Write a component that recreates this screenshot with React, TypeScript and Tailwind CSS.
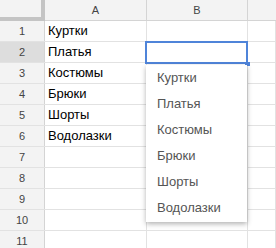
const items = ['Куртки', 'Платья', 'Костюмы', 'Брюки', 'Шорты', 'Водолазки'];
const rows = [1, 2, 3, 4, 5, 6, 7, 8, 9, 10, 11];

function Cell({ children, col }: { children?: React.ReactNode; col: 'a' | 'b' | 'c' }) {
  const w = col === 'a' ? 'w-[102px]' : col === 'b' ? 'w-[101px]' : 'flex-1';
  return (
    <div className={`${w} h-full shrink-0 border-r border-[#e2e2e2] pl-[3px] flex items-center overflow-hidden whitespace-nowrap`}>
      {children}
    </div>
  );
}

export default function App() {
  return (
    <div className="relative w-[276px] h-[248px] overflow-hidden bg-white font-['Liberation_Sans',Arial,sans-serif] text-[13px] text-black">
      {/* Column headers */}
      <div className="flex h-[21px] bg-[#f3f3f3] text-[11px] text-[#444]">
        <div className="w-[45px] shrink-0 border-r-4 border-b-4 border-[#c4c4c4]" />
        <div className="w-[102px] shrink-0 border-r border-b border-[#d4d4d4] flex items-center justify-center">A</div>
        <div className="w-[101px] shrink-0 border-r border-b border-[#d4d4d4] flex items-center justify-center">B</div>
        <div className="flex-1 border-b border-[#d4d4d4]" />
      </div>

      {rows.map((n) => (
        <div key={n} className="flex h-[21px] border-b border-[#e2e2e2]">
          <div
            className={`w-[45px] shrink-0 border-r border-[#d4d4d4] flex items-center justify-center text-[11px] text-[#444] ${
              n === 2 ? 'bg-[#dddddd]' : 'bg-[#f3f3f3]'
            }`}
          >
            {n}
          </div>
          <Cell col="a">{items[n - 1]}</Cell>
          <Cell col="b" />
          <Cell col="c" />
        </div>
      ))}

      {/* Selected cell */}
      <div className="absolute left-[145px] top-[41px] w-[103px] h-[23px] border-2 border-[#4f84d9]" />
      <div className="absolute left-[245px] top-[62px] w-[5px] h-[4px] bg-[#4f84d9]" />

      {/* Dropdown */}
      <div className="absolute left-[146px] top-[65px] w-[101px] h-[157px] bg-white shadow-[0_2px_5px_rgba(0,0,0,0.3)] text-[#555] flex flex-col">
        {items.map((it) => (
          <div key={it} className="h-[26px] flex items-center pl-[11px] whitespace-nowrap">
            {it}
          </div>
        ))}
      </div>
    </div>
  );
}
